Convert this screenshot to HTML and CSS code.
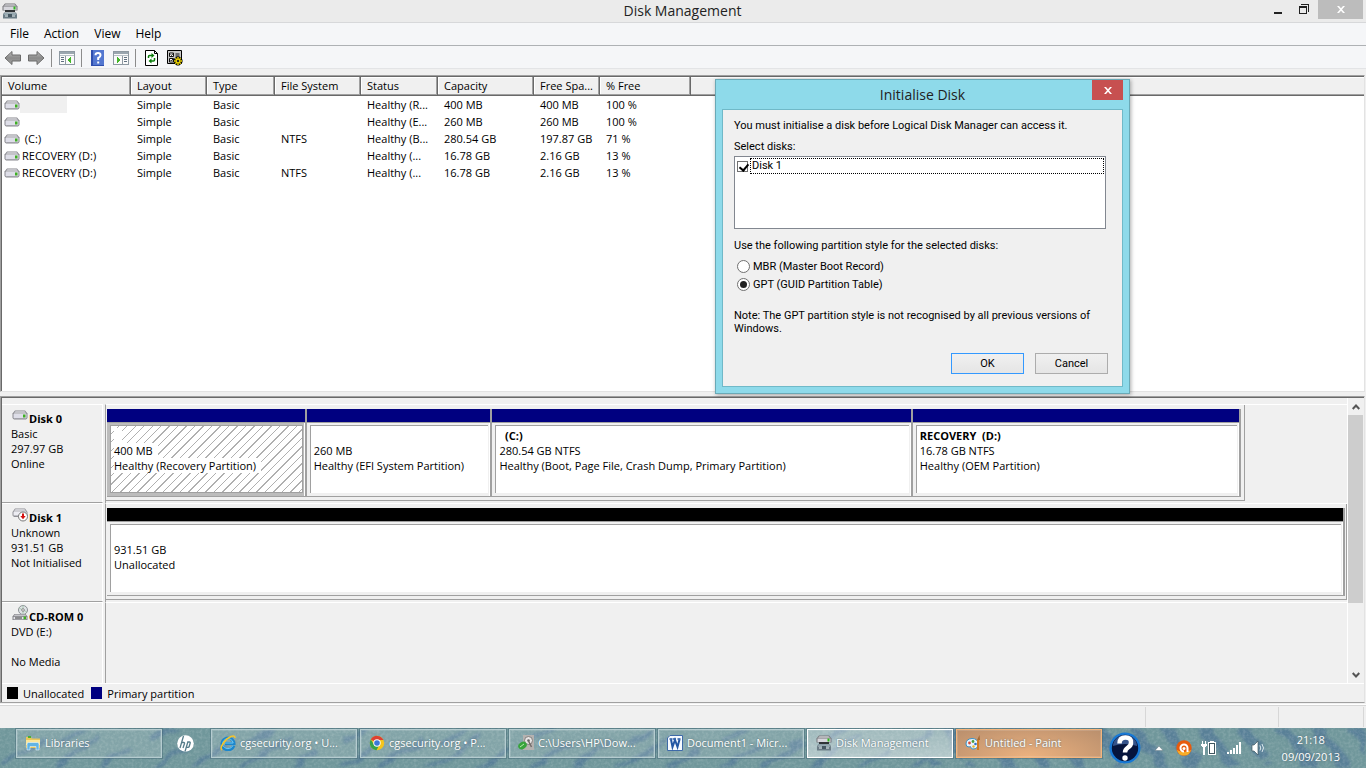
FILE: index.html
```html
<!DOCTYPE html>
<html lang="en">
<head>
<meta charset="utf-8">
<title>Disk Management</title>
<link rel="stylesheet" href="styles.css">
</head>
<body>
<svg class="defs" aria-hidden="true">
  <defs>
    <linearGradient id="arrowfill" x1="0" y1="0" x2="0" y2="1"><stop offset="0" stop-color="#bdbdbd"/><stop offset=".5" stop-color="#8a8a8a"/><stop offset="1" stop-color="#a8a8a8"/></linearGradient>
    <symbol id="drive" viewBox="0 0 16 10">
      <path d="M3 .5h10l2.500 3v4.500L14 9.500H2L.5 8V3.500z" fill="#88888e"/>
      <path d="M3.500 1h9L14.500 4h-13z" fill="#c4c4c9"/>
      <path d="M1.500 4h13v3.500l-1 1h-11l-1-1z" fill="#dedee8"/>
      <path d="M3 8.500h10" stroke="#a2a2aa"/>
      <path d="M11 4.500h2.500v3H11z" fill="#3fae22"/>
    </symbol>
    <symbol id="diskmgmt" viewBox="0 0 16 16">
      <path d="M3 .5h10l2.500 3v4h-15v-4z" fill="#77777b"/><path d="M3.500 1h9l1.500 2H2z" fill="#b5b5b9"/>
      <path d="M1.500 3.500h13V7h-13z" fill="#d6d6dc"/><path d="M11.500 3.500h2v3h-2z" fill="#31b51f"/><path d="M3 7h10v2H3z" fill="#303336"/>
      <path d="M2 9.500h12l1 2v4H1v-4z" fill="#6b7c86"/><path d="M2.500 10h11l.5 2H2z" fill="#97a9b1"/><path d="M3 12.500h3v1H3zM10 12.500h3v1h-3z" fill="#dfe7ea"/><path d="M6 11h4v3H6z" fill="#475862"/>
    </symbol>
    <symbol id="cross" viewBox="0 0 8 7"><path d="M0 0h2l2 2.200L6 0h2L5 3.500 8 7H6L4 4.800 2 7H0l3-3.500z"/></symbol>
  </defs>
</svg>
<div class="screen">
  <header class="titlebar">
    <svg class="i16" ><use href="#diskmgmt"/></svg>
    <h1>Disk Management</h1>
    <div class="caption">
      <button aria-label="Minimise"><svg width="8" height="12" viewBox="0 0 8 12"><path d="M0 8h8v2H0z" fill="#222"/></svg></button>
      <button aria-label="Restore"><svg width="11" height="11" viewBox="0 0 11 11" shape-rendering="crispEdges"><path d="M2 0h8v8H9V1H2zM0 2h8v8H0zM1 4v5h6V4z" fill="#222" fill-rule="evenodd"/></svg></button>
      <button class="close" aria-label="Close"><svg width="8" height="7" fill="#fff"><use href="#cross"/></svg></button>
    </div>
  </header>
  <nav class="menubar"><button>File</button><button>Action</button><button>View</button><button>Help</button></nav>
  <div class="toolbar">
    <button aria-label="Back"><svg width="18" height="16" viewBox="0 0 18 16"><path d="M1 8l7-6.500V5h8.500v6H8v3.500z" fill="url(#arrowfill)" stroke="#6b6b6b"/></svg></button>
    <button aria-label="Forward"><svg width="18" height="16" viewBox="0 0 18 16"><path d="M17 8l-7-6.500V5H1.500v6H10v3.500z" fill="url(#arrowfill)" stroke="#6b6b6b"/></svg></button>
    <i class="sep"></i>
    <button aria-label="Show console tree"><svg width="16" height="14" viewBox="0 0 16 14" shape-rendering="crispEdges"><path d="M.5.500h15v13H.5z" fill="#fafafa" stroke="#8e99a2"/><path d="M1 1h14v2H1z" fill="#9aa6af"/><path d="M1 4h14" stroke="#b8c1c8"/><path d="M2 6h3v1H2zM2 8h3v1H2zM2 10h3v1H2z" fill="#607080"/><path d="M6 5h1v8H6z" fill="#8e99a2"/><path d="M12 6v6L8.500 9z" fill="#43b629"/></svg></button>
    <i class="sep wide"></i>
    <button aria-label="Help"><svg width="13" height="16" viewBox="0 0 13 16"><path d="M0 0h13v16H0z" fill="#2f4fae"/><path d="M2 0h11v15H2z" fill="#5377d0"/><path d="M4.500 5.300Q4.500 3 7 3t2.500 2.300Q9.500 7 7.200 8v2" fill="none" stroke="#fff" stroke-width="2"/><path d="M6.200 11.500h2v2h-2z" fill="#fff"/></svg></button>
    <button class="gap" aria-label="Show action pane"><svg width="16" height="14" viewBox="0 0 16 14" shape-rendering="crispEdges"><path d="M.5.500h15v13H.5z" fill="#fafafa" stroke="#8e99a2"/><path d="M1 1h14v2H1z" fill="#9aa6af"/><path d="M1 4h14" stroke="#b8c1c8"/><path d="M11 6h3v1h-3zM11 8h3v1h-3zM11 10h3v1h-3z" fill="#607080"/><path d="M9 5h1v8H9z" fill="#8e99a2"/><path d="M4 6v6l3.500-3z" fill="#43b629"/></svg></button>
    <i class="sep"></i>
    <button class="gap" aria-label="Refresh"><svg width="13" height="16" viewBox="0 0 13 16"><path d="M.5.500h9l3 3v12H.5z" fill="#fff" stroke="#000"/><path d="M9.500.500v3h3" fill="none" stroke="#000"/><path d="M3.500 8V6.500q0-1 1-1H7M9.500 8v2q0 1-1 1H6" fill="none" stroke="#0a7d0a" stroke-width="1.500"/><path d="M6.500 3L9.500 5.500 6.500 8zM6.500 8.500v5l-3-2.500z" fill="#0a7d0a"/></svg></button>
    <button class="gap" aria-label="Rescan disks"><svg width="16" height="16" viewBox="0 0 16 16"><path d="M.5.500h14v13H.5z" fill="#c9c9c9" stroke="#000"/><path d="M2.500 3h4v3.500h-4zM2.500 8.500h4V12h-4z" fill="#fff" stroke="#111"/><path d="M3.500 4.500l1 1 1.500-2M3.500 10l1 1 1.500-2" stroke="#111" fill="none"/><path d="M8.500 4h4M8.500 6h4" stroke="#111"/><g stroke="#000" stroke-width="3"><path d="M11 6.500v9M6.500 11h9M8 8l6 6M14 8l-6 6"/></g><g stroke="#f0d800" stroke-width="1.500"><path d="M11 7v8M7 11h8M8.300 8.300l5.400 5.400M13.700 8.300l-5.400 5.400"/></g><circle cx="11" cy="11" r="1.200" fill="#222"/></svg></button>
  </div>

  <main class="workspace">
    <section class="volumes">
      <table>
        <colgroup><col class="c-vol"><col class="c-lay"><col class="c-type"><col class="c-fs"><col class="c-stat"><col class="c-cap"><col class="c-free"><col class="c-pct"><col></colgroup>
        <thead><tr><th>Volume</th><th>Layout</th><th>Type</th><th>File System</th><th>Status</th><th>Capacity</th><th>Free Spa...</th><th>% Free</th><th></th></tr></thead>
        <tbody>
          <tr><td><span class="vol"><svg class="drive"><use href="#drive"/></svg><span class="blank"></span></span></td><td>Simple</td><td>Basic</td><td></td><td>Healthy (R...</td><td>400 MB</td><td>400 MB</td><td>100 %</td><td></td></tr>
          <tr><td><span class="vol"><svg class="drive"><use href="#drive"/></svg></span></td><td>Simple</td><td>Basic</td><td></td><td>Healthy (E...</td><td>260 MB</td><td>260 MB</td><td>100 %</td><td></td></tr>
          <tr><td><span class="vol"><svg class="drive"><use href="#drive"/></svg><span class="name">&nbsp;(C:)</span></span></td><td>Simple</td><td>Basic</td><td>NTFS</td><td>Healthy (B...</td><td>280.54 GB</td><td>197.87 GB</td><td>71 %</td><td></td></tr>
          <tr><td><span class="vol"><svg class="drive"><use href="#drive"/></svg><span class="name">RECOVERY (D:)</span></span></td><td>Simple</td><td>Basic</td><td></td><td>Healthy (...</td><td>16.78 GB</td><td>2.16 GB</td><td>13 %</td><td></td></tr>
          <tr><td><span class="vol"><svg class="drive"><use href="#drive"/></svg><span class="name">RECOVERY (D:)</span></span></td><td>Simple</td><td>Basic</td><td>NTFS</td><td>Healthy (...</td><td>16.78 GB</td><td>2.16 GB</td><td>13 %</td><td></td></tr>
        </tbody>
      </table>
    </section>
    <section class="graph">
      <div class="graph-body">
        <div class="disks">
          <article class="disk">
            <div class="label"><h2><svg class="i16"><use href="#drive"/></svg>Disk 0</h2><p>Basic</p><p>297.97 GB</p><p>Online</p></div>
            <div class="lane"><div class="track short">
              <div class="part selected"><div class="bar"></div><div class="box"><p>&nbsp;</p><p>400 MB</p><p>Healthy (Recovery Partition)</p></div></div>
              <div class="part"><div class="bar"></div><div class="box"><p>&nbsp;</p><p>260 MB</p><p>Healthy (EFI System Partition)</p></div></div>
              <div class="part"><div class="bar"></div><div class="box"><p><b>&nbsp; (C:)</b></p><p>280.54 GB NTFS</p><p>Healthy (Boot, Page File, Crash Dump, Primary Partition)</p></div></div>
              <div class="part"><div class="bar"></div><div class="box"><p><b>RECOVERY &nbsp;(D:)</b></p><p>16.78 GB NTFS</p><p>Healthy (OEM Partition)</p></div></div>
            </div></div>
          </article>
          <article class="disk">
            <div class="label"><h2><svg class="i16" viewBox="0 0 16 16"><path d="M3 2.500h10L15.500 6v4L14 11H2L.5 9.500V6z" fill="#909096"/><path d="M3.500 3h9l2 3h-13z" fill="#cfcfd4"/><path d="M1.500 6h13v3.500h-13z" fill="#ececf2"/><circle cx="11" cy="10.500" r="4.500" fill="#fff" stroke="#777"/><path d="M10 7.500h2v2.500h1.700L11 13.200 8.300 10H10z" fill="#d41212"/></svg>Disk 1</h2><p>Unknown</p><p>931.51 GB</p><p>Not Initialised</p></div>
            <div class="lane"><div class="track">
              <div class="part free"><div class="bar"></div><div class="box"><p>&nbsp;</p><p>931.51 GB</p><p>Unallocated</p></div></div>
            </div></div>
          </article>
          <article class="disk last">
            <div class="label"><h2><svg class="i16" viewBox="0 0 16 16"><circle cx="11" cy="5" r="4.500" fill="#dfe3e6" stroke="#8b9094"/><path d="M11 .5V9M7 3l8 4" stroke="#a9c9b0"/><circle cx="11" cy="5" r="1.300" fill="#fff" stroke="#888"/><path d="M2.500 9h11l2 2.500v3.500H.5v-3.500z" fill="#808086"/><path d="M3 9.500h10l1.500 1.800h-13z" fill="#c5c5ca"/><path d="M1.500 12h13v2.300h-13z" fill="#e4e4ea"/><path d="M3 13h7" stroke="#333"/><path d="M11.500 11.500H14v2.800h-2.500z" fill="#3fae22"/></svg>CD-ROM 0</h2><p>DVD (E:)</p><p>&nbsp;</p><p>No Media</p></div>
            <div class="lane"></div>
          </article>
        </div>
        <div class="scroll">
          <button aria-label="Scroll up"><svg width="8" height="6" viewBox="0 0 8 6"><path d="M.7 5L4 1.500 7.300 5" fill="none" stroke="#555" stroke-width="2"/></svg></button>
          <div class="thumb"></div>
          <button aria-label="Scroll down"><svg width="8" height="6" viewBox="0 0 8 6"><path d="M.7 1L4 4.500 7.300 1" fill="none" stroke="#555" stroke-width="2"/></svg></button>
        </div>
      </div>
      <div class="legend"><i class="swatch black"></i><span>Unallocated</span><i class="swatch navy"></i><span>Primary partition</span></div>
    </section>
  </main>
  <div class="status"><span></span><span></span><span></span></div>

  <footer class="taskbar">
    <svg class="water" preserveAspectRatio="none" viewBox="0 0 1366 40" aria-hidden="true">
      <defs>
        <filter id="soft" x="0" y="0" width="1" height="1"><feTurbulence type="fractalNoise" baseFrequency=".03 .06" numOctaves="2" seed="4"/><feDisplacementMap in="SourceGraphic" scale="16" xChannelSelector="R" yChannelSelector="G"/><feGaussianBlur stdDeviation="1.800"/></filter>
        <filter id="grain" x="0" y="0" width="1" height="1"><feTurbulence type="fractalNoise" baseFrequency=".35" numOctaves="2" seed="8"/><feColorMatrix values="0 0 0 0 1  0 0 0 0 1  0 0 0 0 1  .9 0 0 0 -.35"/></filter>
        <pattern id="waves" width="190" height="60" patternUnits="userSpaceOnUse"><path d="M-10 45L45 12M30 55L100 8M88 46L130 22M120 60L200 10M60 16L90-6M150 14L180-4" stroke="#557c97" stroke-width="5"/></pattern>
        <pattern id="waves2" width="150" height="60" patternUnits="userSpaceOnUse"><path d="M0 -6L42 52M40 -8L65 28M78 -6L118 48M112 -6L150 42M66 36L84 60" stroke="#557c97" stroke-width="11"/></pattern>
      </defs>
      <path d="M0 0h1366v40H0z" fill="#70979b"/>
      <g filter="url(#soft)" opacity=".85"><path d="M0 0h930v40H0z" fill="url(#waves)"/><path d="M930 0h436v40H930z" fill="url(#waves2)"/></g>
      <path d="M0 0h1366v40H0z" filter="url(#grain)" opacity=".35"/>
    </svg>
    <div class="tasks">
      <button class="task"><svg class="i16" viewBox="0 0 16 16"><path d="M1 2h5l1 1.500h8V13H1z" fill="#e9c65a"/><path d="M3 1h3v2H3z" fill="#4caf32"/><path d="M1 5h14v5H1z" fill="#fbe69a"/><path d="M2 15V9q0-1.500 1.500-1.500h9Q14 7.500 14 9v6h-3v-3.500H5V15z" fill="#62b4e4" stroke="#e8f7ff" stroke-width=".6"/></svg><span>Libraries</span></button>
      <button class="hp" aria-label="HP"><svg width="17" height="17" viewBox="0 0 17 17"><circle cx="8.500" cy="8.500" r="8.300" fill="#fff"/><path d="M6.500 1L3 13M5 7.500h1.800q1 0 .7 1L6 13M11 6.500L8 16.500M10.500 7h2q1 0 .7 1l-1 3.500q-.2.900-1.200.9H9.300" fill="none" stroke="#557c8a" stroke-width="1.300"/></svg></button>
      <button class="task"><svg class="i16" viewBox="0 0 16 16"><path d="M13.800 10.500A6 5.800 0 1 1 14 8.500H5" fill="none" stroke="#1d86cc" stroke-width="3"/><path d="M13 10.200A5.300 5 0 1 1 13.200 8H5" fill="none" stroke="#6fc9f3" stroke-width="1"/><path d="M2 15C-1 13 5 4 11 1.500q4-1.500 4 1.500" fill="none" stroke="#f4c52b" stroke-width="1.600"/></svg><span>cgsecurity.org • U...</span></button>
      <button class="task"><svg class="i16" viewBox="0 0 16 16"><circle cx="8" cy="8" r="7.200" fill="#f5c51c"/><path d="M8 8L1.800 4.400A7.200 7.200 0 0 1 14.500 5H8z" fill="#dd4033"/><path d="M1.800 4.400A7.200 7.200 0 0 0 7.500 15.200L10.500 9.500 5 9.500z" fill="#36a24b"/><circle cx="8" cy="8" r="3.700" fill="#fff"/><circle cx="8" cy="8" r="2.800" fill="#3b78d8"/></svg><span>cgsecurity.org • P...</span></button>
      <button class="task"><svg class="i16" viewBox="0 0 16 16"><path d="M5 0h11v15H5z" fill="#b5b2b0"/><circle cx="10.500" cy="5.500" r="4" fill="#e7e5e4" stroke="#817d7b"/><circle cx="10.500" cy="5.500" r="1.300" fill="#666"/><path d="M10.500 6l3 6" stroke="#746d6a" stroke-width="1.500"/><ellipse cx="4.500" cy="10.500" rx="4.500" ry="3.500" fill="#38a43c" transform="rotate(-30 4.500 10.500)"/><path d="M2 12l4-3" stroke="#b8eeb0"/></svg><span>C:\Users\HP\Dow...</span></button>
      <button class="task"><svg class="i16" viewBox="0 0 16 16"><path d="M3 .5h12.500v15H.5V3z" fill="#f7faff" stroke="#3e6aa8"/><path d="M2.500 4h3M6 4h3M10.500 4h3" stroke="#2457a4" stroke-width="1.500"/><path d="M4 4.500L5.500 12 8 5l2.500 7L12.500 4.500" fill="none" stroke="#2457a4" stroke-width="2"/></svg><span>Document1 - Micr...</span></button>
      <button class="task active"><svg class="i16"><use href="#diskmgmt"/></svg><span>Disk Management</span></button>
      <button class="task alert"><svg class="i16" viewBox="0 0 16 16"><path d="M1 9q0-5 6-5.500 6 0 6 5.500 0 5-5 5-2 0-2-1.500T4 12q-3 0-3-3z" fill="#e9f4fb" stroke="#3b92c6"/><circle cx="4.500" cy="8" r="1.400" fill="#d94b36"/><circle cx="8" cy="6.500" r="1.400" fill="#4a9d3c"/><circle cx="10.500" cy="9" r="1.300" fill="#2f6fc4"/><circle cx="8.500" cy="11.500" r="1.200" fill="#e5b52c"/><path d="M13 15V5" stroke="#cf7b20" stroke-width="2"/><path d="M12 5L14.500 0 15 5z" fill="#a86b35"/></svg><span>Untitled - Paint</span></button>
    </div>
    <div class="tray">
      <button aria-label="Help and support"><svg width="32" height="32" viewBox="0 0 32 32"><circle cx="16" cy="16" r="15.500" fill="#1878d4"/><circle cx="16" cy="16" r="13.200" fill="#06143c"/><path d="M4 14A12 11 0 0 1 28 14Q16 10 4 14z" fill="#35538a"/><path d="M10.500 11.500Q10.500 5.500 16.500 5.500T22 11q0 2.500-3 4.500t-3 5" fill="none" stroke="#fff" stroke-width="4.500"/><circle cx="16" cy="26" r="2.700" fill="#fff"/></svg></button>
      <button aria-label="Show hidden icons"><svg width="8" height="5" viewBox="0 0 8 5"><path d="M4 0l4 4.500H0z" fill="#fff" stroke="#50666e" stroke-width=".4"/></svg></button>
      <button aria-label="Antivirus"><svg width="16" height="16" viewBox="0 0 16 16"><circle cx="8" cy="8" r="7.700" fill="#e85a0c"/><path d="M1 10a7.200 7.200 0 0 0 14 0Q8 14 1 10z" fill="#f7ad28"/><path d="M11.500 12V8A3.500 3.500 0 1 0 8 11.500" fill="none" stroke="#fff" stroke-width="2"/><circle cx="8" cy="8.500" r="1.500" fill="#fff"/></svg></button>
      <button aria-label="Power"><svg width="16" height="16" viewBox="0 0 16 16" shape-rendering="crispEdges"><path d="M7 2h2V1h4v1h2v13H7z" fill="#fff"/><path d="M8 3h6v11H8z" fill="#3f565f"/><path d="M9 4h4v9H9z" fill="#fff"/><path d="M1 1h1v3H1zM4 1h1v3H4zM0 4h6v2H5v1H4v8H2V7H1V6H0z" fill="#fff"/></svg></button>
      <button aria-label="Network"><svg width="16" height="14" viewBox="0 0 16 14" shape-rendering="crispEdges"><path d="M1 11h2v2H1zM4 9h2v4H4zM7 7h2v6H7zM10 4h2v9h-2zM13 1h2v12h-2z" fill="#fff"/></svg></button>
      <button aria-label="Volume"><svg width="14" height="16" viewBox="0 0 14 16"><path d="M1 5h2l4-4v14l-4-4H1z" fill="#fff" stroke="#3f565f" stroke-width=".7"/><path d="M9 5.500q1.500 2.500 0 5M11 4q3 4 0 8" fill="none" stroke="#dce9ed"/></svg></button>
      <time class="clock"><span>21:18</span><span>09/09/2013</span></time>
    </div>
  </footer>

  <form class="dialog" role="dialog" aria-labelledby="dlg-title">
    <div class="dlg-title"><h2 id="dlg-title">Initialise Disk</h2><button type="button" class="dlg-close" aria-label="Close"><svg width="8" height="7" fill="#fff"><use href="#cross"/></svg></button></div>
    <div class="dlg-body">
      <p>You must initialise a disk before Logical Disk Manager can access it.</p>
      <p class="select">Select disks:</p>
      <div class="listbox"><input type="checkbox" id="d1" checked><label for="d1">Disk 1</label></div>
      <p class="style">Use the following partition style for the selected disks:</p>
      <div class="radio"><input type="radio" name="style" id="mbr"><label for="mbr">MBR (Master Boot Record)</label></div>
      <div class="radio"><input type="radio" name="style" id="gpt" checked><label for="gpt">GPT (GUID Partition Table)</label></div>
      <p class="note">Note: The GPT partition style is not recognised by all previous versions of Windows.</p>
      <div class="actions"><button type="button" class="default">OK</button><button type="button">Cancel</button></div>
    </div>
  </form>
</div>
</body>
</html>
```
FILE: styles.css
```css
* { box-sizing: border-box; }
body { margin: 0; font: 11px/15px "Open Sans", "Noto Sans", sans-serif; color: #000; background: #f0f0f0; }
h1, h2, p { margin: 0; font-weight: 400; }
button { margin: 0; padding: 0; border: 0; background: none; font: inherit; color: inherit; }
svg { display: block; flex: none; }
.defs { position: absolute; width: 0; height: 0; }
.i16 { width: 16px; height: 16px; }
.drive { width: 16px; height: 10px; }
.screen { position: relative; min-height: 100vh; display: flex; flex-direction: column; overflow: hidden; }

.titlebar { display: grid; grid-template-columns: 1fr auto 1fr; align-items: center; height: 23px; padding: 0 3px 0 2px; background: #ebebeb; border-bottom: 1px solid #d7d8da; }
.titlebar h1 { font-size: 14px; line-height: 22px; color: #222; }
.caption { display: flex; justify-content: flex-end; align-self: start; height: 19px; gap: 17px; }
.caption .close { width: 45px; margin-left: -9px; background: #bcbcbc; }
.caption button { display: flex; align-items: center; justify-content: center; }

.menubar { display: flex; gap: 15px; height: 23px; padding: 0 0 1px 10px; background: #f5f6f8; border-bottom: 1px solid #aeb1b4; font-size: 12px; }
.toolbar { display: flex; align-items: center; height: 23px; padding: 2px 0 0 4px; background: #f5f6f8; border-bottom: 1px solid #e3e4e6; }
.toolbar button + button { margin-left: 5px; }
.sep { width: 1px; height: 18px; margin: 0 7px 0 6px; background: #8c8c8c; }
.sep.wide { margin-right: 9px; }
.toolbar .gap + .gap, .toolbar button + .gap { margin-left: 9px; }
.toolbar .sep + .gap { margin-left: 2px; }

.workspace { flex: 1; display: flex; flex-direction: column; padding: 6px 1px 0 0; }
.volumes { flex: 1; background: #fff; border: 1px solid #a0a0a0; border-right-color: #e3e3e3; border-bottom-color: #e3e3e3; box-shadow: inset 1px 1px #696969; padding: 1px 0 0 1px; }
table { width: 100%; border-collapse: separate; border-spacing: 0; table-layout: fixed; }
.c-vol { width: 129px; } .c-lay { width: 76px; } .c-type { width: 68px; } .c-fs { width: 86px; }
.c-stat { width: 77px; } .c-cap { width: 96px; } .c-free { width: 66px; } .c-pct { width: 91px; }
th, td { padding: 0 0 0 6px; text-align: left; font-weight: 400; white-space: nowrap; overflow: hidden; }
th { height: 19px; line-height: 18px; background: #f0f0f0; border-right: 1px solid #696969; border-bottom: 1px solid #696969; box-shadow: inset -1px -1px #a0a0a0, inset 1px 1px #fff; }
th:last-child { border-right: 0; box-shadow: inset 0 -1px #a0a0a0, inset 0 1px #fff; }
td { height: 17px; line-height: 17px; }
td:first-child { padding-left: 2px; }
.vol { display: flex; align-items: center; height: 17px; }
.blank { width: 47px; height: 17px; background: #f0f0f0; }
.name { padding-left: 2px; }

.graph { margin-top: 4px; border: 1px solid #a0a0a0; border-right-color: #e3e3e3; box-shadow: inset 1px 1px #696969; padding: 1px 0 0 1px; }
.graph-body { display: flex; border-bottom: 1px solid #fff; }
.disks { flex: 1; padding-top: 6px; border-right: 1px solid #fff; }
.disk { display: flex; height: 99px; }
.disk.last { height: 81px; }
.label { width: 101px; padding: 6px 0 0 9px; border: 1px solid #fff; border-left: 0; border-bottom: 1px solid #a0a0a0; }
.last .label { border-bottom: 0; }
.label h2 { display: flex; align-items: flex-start; height: 15px; margin-left: 1px; font-size: 12px; font-weight: 700; line-height: 15px; gap: 1px; white-space: nowrap; }
.label .i16 { margin-top: -4px; }
.label h2 { font-size: 11px; }
.lane { flex: 1; margin-left: 2px; border-left: 1px solid #a0a0a0; border-top: 1px solid #fff; }
.track { display: grid; grid-template-columns: 1fr; height: 96px; padding: 4px 1px 3px; border-right: 1px solid #a0a0a0; border-bottom: 1px solid #a0a0a0; }
.track.short { width: 91.8%; padding-right: 3px; grid-template-columns: 200fr 186fr 421fr 329fr; }
.part { display: flex; flex-direction: column; border-right: 2px solid #a0a0a0; border-bottom: 1px solid #a0a0a0; box-shadow: inset -1px 0 #fff; }
.bar { height: 14px; background: #000080; border-bottom: 1px solid #a0a0a0; }
.free .bar { background: #000; }
.box { flex: 1; margin: 2px 2px 3px 3px; padding: 2px 3px; background: #fff; border-top: 1px solid #a0a0a0; border-left: 1px solid #a0a0a0; white-space: nowrap; overflow: hidden; }
.selected { background: #bcbcbc; }
.selected .box { border: 1px solid #a0a0a0; background: repeating-linear-gradient(135deg, #fff 0, #fff 5px, #b0b0b0 5px, #b0b0b0 6px); }
.selected .box p { width: fit-content; padding-right: 5px; background: #fff; }
.scroll { display: flex; flex-direction: column; width: 16px; padding-right: 1px; }
.scroll button { display: flex; align-items: center; justify-content: center; height: 17px; }
.thumb { height: 188px; margin-bottom: auto; background: #cdcdcd; }
.legend { display: flex; align-items: center; height: 18px; padding-left: 5px; }
.swatch { width: 11px; height: 12px; margin-right: 5px; }
.legend span + .swatch { margin-left: 7px; }
.black { background: #000; }
.navy { background: #000080; }

.status { display: flex; justify-content: flex-end; height: 24px; margin-top: 1px; border-top: 1px solid #fff; box-shadow: inset 0 1px #d7d7d7; padding: 2px 2px 1px 0; }
.status span { border-right: 1px solid #d7d7d7; width: 85px; }
.status span:nth-child(2) { width: 133px; }

.taskbar { position: relative; display: flex; height: 40px; color: #fff; background: #668d98; }
.water { position: absolute; width: 100%; height: 100%; }
.tasks { position: relative; flex: 1; display: flex; gap: 3px; padding: 1px 0 0 16px; }
.task { display: flex; align-items: center; gap: 4px; flex: 1; max-width: 146px; height: 29px; padding: 0 0 2px 8px; border: 1px solid #b5ccd0; background: #ffffff22; box-shadow: inset 0 0 0 1px #ffffff20; outline: 1px solid #3d606f66; white-space: nowrap; overflow: hidden; }
.task span { overflow: hidden; text-shadow: 0 0 2px #48636e; }
.task.active { background: linear-gradient(#ffffff55, #ffffff77); border-color: #fff; }
.task.alert { background: radial-gradient(ellipse at 50% 100%, #edb27f, #b98f6d); border-color: #f5b57c; }
.hp { display: flex; align-items: center; width: 43px; height: 29px; padding-left: 12px; }
.tray { position: relative; display: flex; align-items: center; gap: 8px; padding-right: 26px; }
.tray button + button + button { margin-left: 1px; }
.tray button:nth-child(2) { margin: 0 4px 0 6px; }
.clock { display: flex; flex-direction: column; align-items: center; margin-left: 9px; line-height: 17px; text-shadow: 0 0 2px #48636e; }

.dialog { position: absolute; left: 715px; top: 79px; width: 415px; padding: 0 6px 6px; background: #8edaea; border: 1px solid #6aa9b6; box-shadow: 1px 1px 4px #00000055; font: 11px/13px Roboto, "Liberation Sans", sans-serif; }
.dlg-title { position: relative; height: 29px; text-align: center; }
.dlg-title h2 { font: 14px/30px "Open Sans", sans-serif; color: #222; }
.dlg-close { position: absolute; right: 0; top: 0; display: flex; align-items: center; justify-content: center; width: 31px; height: 20px; background: #c75050; }
.dlg-body { padding: 9px 14px 12px 11px; background: #f0f0f0; border: 1px solid #70b9c8; }
.select { margin-top: 8px; }
.listbox { display: flex; align-items: flex-start; height: 73px; width: 372px; margin: 3px 0 10px; padding: 1px; background: #fff; border: 1px solid #828790; }
.listbox label { flex: 1; height: 16px; padding-left: 1px; border: 1px dotted #000; line-height: 14px; }
input { appearance: none; flex: none; margin: 0; background: #fff; border: 1px solid #707070; }
.listbox input { width: 11px; height: 11px; margin: 3px 2px 0 1px; }
.listbox input::after { content: ""; display: block; width: 4px; height: 7px; margin: 0 0 0 3px; border: solid #000; border-width: 0 2px 2px 0; transform: rotate(40deg); }
.radio { display: flex; align-items: center; gap: 3px; height: 18px; padding-left: 3px; }
.style { margin-bottom: 5px; }
.radio input { width: 13px; height: 13px; border-radius: 50%; padding: 2px; }
.radio input:checked::after { content: ""; display: block; width: 7px; height: 7px; border-radius: 50%; background: #222; }
.note { margin-top: 16px; }
.actions { display: flex; justify-content: flex-end; gap: 11px; margin-top: 18px; }
.actions button { width: 73px; height: 21px; border: 1px solid #acacac; background: linear-gradient(#f0f0f0, #e5e5e5); }
.actions .default { border-color: #3399ff; }
```
